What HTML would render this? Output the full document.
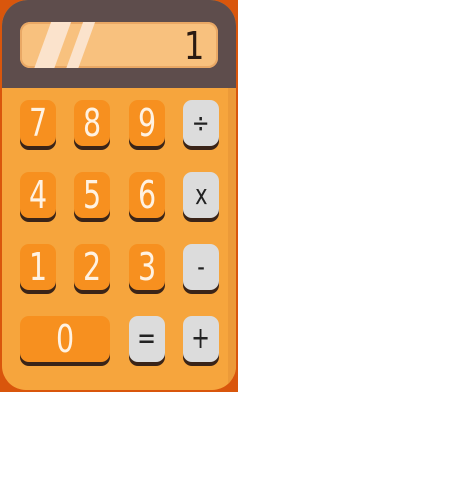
<!DOCTYPE html>
<html><head><meta charset="utf-8"><style>
html,body{margin:0;padding:0;background:#fff;width:450px;height:500px;overflow:hidden}
.bg{position:absolute;left:0;top:0;width:238px;height:392px;background:#d9560c}
.body{position:absolute;left:2px;top:0;width:234px;height:390px;background:#f6a53d;border-radius:26px 26px 24px 24px;overflow:hidden}
.edge{position:absolute;right:0;top:88px;width:8px;height:300px;background:#ec9a38}
.top{position:absolute;left:0;top:0;width:234px;height:88px;background:#5e4d4c}
.disp{position:absolute;left:18px;top:22px;width:198px;height:46px;background:#f8c17e;border-radius:10px;box-shadow:inset 0 0 0 2px #e9a865;overflow:hidden}
.s1{position:absolute;left:22px;top:0;width:20px;height:50px;background:#fbe3cc;transform:skewX(-20deg)}
.s2{position:absolute;left:54px;top:0;width:12px;height:50px;background:#fbe3cc;transform:skewX(-20deg)}
.num{position:absolute;right:12px;top:2px;font:38px "DejaVu Sans","Liberation Sans",sans-serif;color:#2a1a12;transform:scaleX(0.85)}
.b{position:absolute;width:36px;height:46px;border-radius:9px;background:#f7901f;box-shadow:0 4px 0 #3a2418;color:#fff2e2;font:38px "DejaVu Sans","Liberation Sans",sans-serif;text-align:center;line-height:46px}
.b span{display:inline-block;transform:scaleX(0.75)}
.g{background:#dcdcdc;color:#222}
</style></head><body>
<div class="bg"></div>
<div class="body">
<div class="edge"></div>
<div class="top"><div class="disp"><div class="s1"></div><div class="s2"></div><div class="num">1</div></div></div>
</div>
<div class="b" style="left:20px;top:100px"><span>7</span></div>
<div class="b" style="left:74px;top:100px"><span>8</span></div>
<div class="b" style="left:129px;top:100px"><span>9</span></div>
<div class="b g" style="left:183px;top:100px;font-size:28px"><span>÷</span></div>
<div class="b" style="left:20px;top:172px"><span>4</span></div>
<div class="b" style="left:74px;top:172px"><span>5</span></div>
<div class="b" style="left:129px;top:172px"><span>6</span></div>
<div class="b g" style="left:183px;top:172px;font-size:28px"><span>x</span></div>
<div class="b" style="left:20px;top:244px"><span>1</span></div>
<div class="b" style="left:74px;top:244px"><span>2</span></div>
<div class="b" style="left:129px;top:244px"><span>3</span></div>
<div class="b g" style="left:183px;top:244px;font-size:28px"><span>-</span></div>
<div class="b" style="left:20px;top:316px;width:90px"><span>0</span></div>
<div class="b g" style="left:129px;top:316px;font-size:30px"><span>=</span></div>
<div class="b g" style="left:183px;top:316px;font-size:30px"><span>+</span></div>
</body></html>
